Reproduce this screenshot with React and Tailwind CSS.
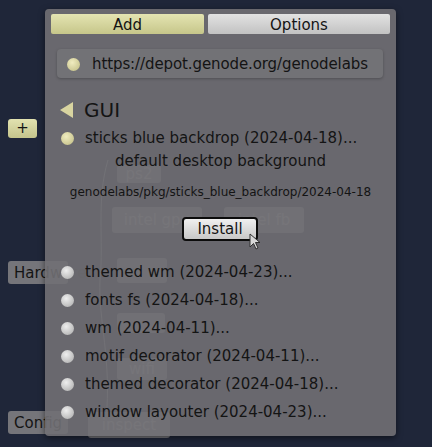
import React from 'react';

const font = { fontFamily: '"DejaVu Sans", Verdana, sans-serif' };

const items = [
  'themed wm (2024-04-23)...',
  'fonts fs (2024-04-18)...',
  'wm (2024-04-11)...',
  'motif decorator (2024-04-11)...',
  'themed decorator (2024-04-18)...',
  'window layouter (2024-04-23)...',
];

const ghosts = [
  { label: 'ps2', cls: 'left-[117px] top-[165px] w-[44px] h-[18px]' },
  { label: 'intel gpu', cls: 'left-[112px] top-[207px] w-[90px] h-[26px]' },
  { label: 'intel fb', cls: 'left-[224px] top-[207px] w-[80px] h-[26px]' },
  { label: '', cls: 'left-[117px] top-[258px] w-[50px] h-[25px]' },
  { label: '', cls: 'left-[117px] top-[313px] w-[48px] h-[20px]' },
  { label: 'wifi', cls: 'left-[117px] top-[358px] w-[50px] h-[22px]' },
  { label: 'inspect', cls: 'left-[88px] top-[412px] w-[82px] h-[26px]' },
];

const Dot = ({ active }) => (
  <span
    className={`block w-[13px] h-[13px] rounded-full shrink-0 ${
      active
        ? 'bg-[radial-gradient(circle_at_40%_35%,#f0ecc0,#cdc994_70%,#b5b180)]'
        : 'bg-[radial-gradient(circle_at_40%_35%,#eeeeee,#bdbdbd_70%,#9a9a9a)]'
    }`}
  />
);

const Cursor = () => (
  <svg width="14" height="18" viewBox="0 0 14 18" className="absolute left-[249px] top-[233px]">
    <path d="M1 1 L1 14 L4.5 10.5 L7 16 L9 15 L6.5 9.5 L11 9.5 Z" fill="#d8d8d8" stroke="#303030" strokeWidth="1" />
  </svg>
);

export default function App() {
  return (
    <div className="relative w-[432px] h-[447px] overflow-hidden bg-[#1f2639] text-[#141414]" style={font}>
      {/* desktop canvas behind the dialog */}
      <div className="absolute left-[8px] top-[119px] w-[29px] h-[19px] rounded-[3px] bg-gradient-to-b from-[#e2e2b0] to-[#c4c48c] flex items-center justify-center text-[15px] leading-none">+</div>
      <div className="absolute left-[8px] top-[261px] w-[60px] h-[23px] rounded-[3px] bg-[#75757a] pl-[6px] pt-[1px] flex items-center text-[15px]">Hardware</div>
      <div className="absolute left-[8px] top-[411px] w-[60px] h-[23px] rounded-[3px] bg-[#75757a] pl-[6px] pt-[1px] flex items-center text-[15px]">Config</div>
      {ghosts.map((g, i) => (
        <div key={i} className={`absolute ${g.cls} rounded-[3px] bg-[#737378] flex items-center justify-center text-[15px] text-[#a0a0a4]`}>
          {g.label}
        </div>
      ))}
      <svg className="absolute left-0 top-0" width="432" height="447">
        <path d="M108 160 C96 200 104 240 100 280 C98 320 112 360 106 420" stroke="#7c7c82" strokeWidth="1" fill="none" />
      </svg>

      {/* dialog */}
      <div className="absolute left-[45px] top-[9px] w-[351px] h-[427px] rounded-[4px] bg-[rgba(113,112,116,0.9)] shadow-[0_2px_6px_rgba(0,0,0,0.5)]">
        <div className="flex gap-[4px] px-[6px] pt-[5px]">
          <div className="w-[153px] h-[20px] pt-[2px] rounded-[2px] bg-gradient-to-b from-[#e4e4b2] to-[#c6c68a] flex items-center justify-center text-[15px] leading-none">Add</div>
          <div className="flex-1 h-[20px] pt-[2px] rounded-[2px] bg-gradient-to-b from-[#e2e2e2] to-[#c2c2c2] flex items-center justify-center text-[15px] leading-none">Options</div>
        </div>

        <div className="mt-[15px] ml-[12px] mr-[13px] h-[29px] pt-[1px] rounded-[4px] bg-[#727276] shadow-[0_1px_3px_rgba(0,0,0,0.25)] flex items-center gap-[12px] pl-[10px] text-[15px] tracking-[-0.1px]">
          <Dot active />
          <span>https://depot.genode.org/genodelabs</span>
        </div>

        <div className="mt-[20px] h-[24px] flex items-center gap-[11px] pl-[15px]">
          <svg width="13" height="16" viewBox="0 0 13 16">
            <path d="M13 0 L13 16 L0 8 Z" fill="#d8d4a0" />
          </svg>
          <span className="text-[20px] leading-none">GUI</span>
        </div>

        <div className="mt-[4px] h-[24px] flex items-center gap-[11px] pl-[16px] text-[15px]">
          <Dot active />
          <span>sticks blue backdrop (2024-04-18)...</span>
        </div>
        <div className="h-[20px] pt-[2px] flex items-center justify-center text-[15px]">default desktop background</div>
        <div className="mt-[11px] h-[20px] pt-[1px] flex items-center justify-center text-[12px]">genodelabs/pkg/sticks_blue_backdrop/2024-04-18</div>
        <div className="mt-[16px] flex justify-center">
          <div className="ml-[-1px] w-[76px] h-[24px] pt-[1px] rounded-[4px] border-2 border-[#0c0c0c] bg-gradient-to-b from-[#f0f0f0] to-[#c8c8c8] flex items-center justify-center text-[15px] leading-none">Install</div>
        </div>

        <div className="mt-[17px] flex flex-col">
          {items.map((t) => (
            <div key={t} className="h-[28px] pt-[1px] flex items-center gap-[11px] pl-[16px] text-[15px]">
              <Dot />
              <span>{t}</span>
            </div>
          ))}
        </div>
      </div>
      <Cursor />
    </div>
  );
}
